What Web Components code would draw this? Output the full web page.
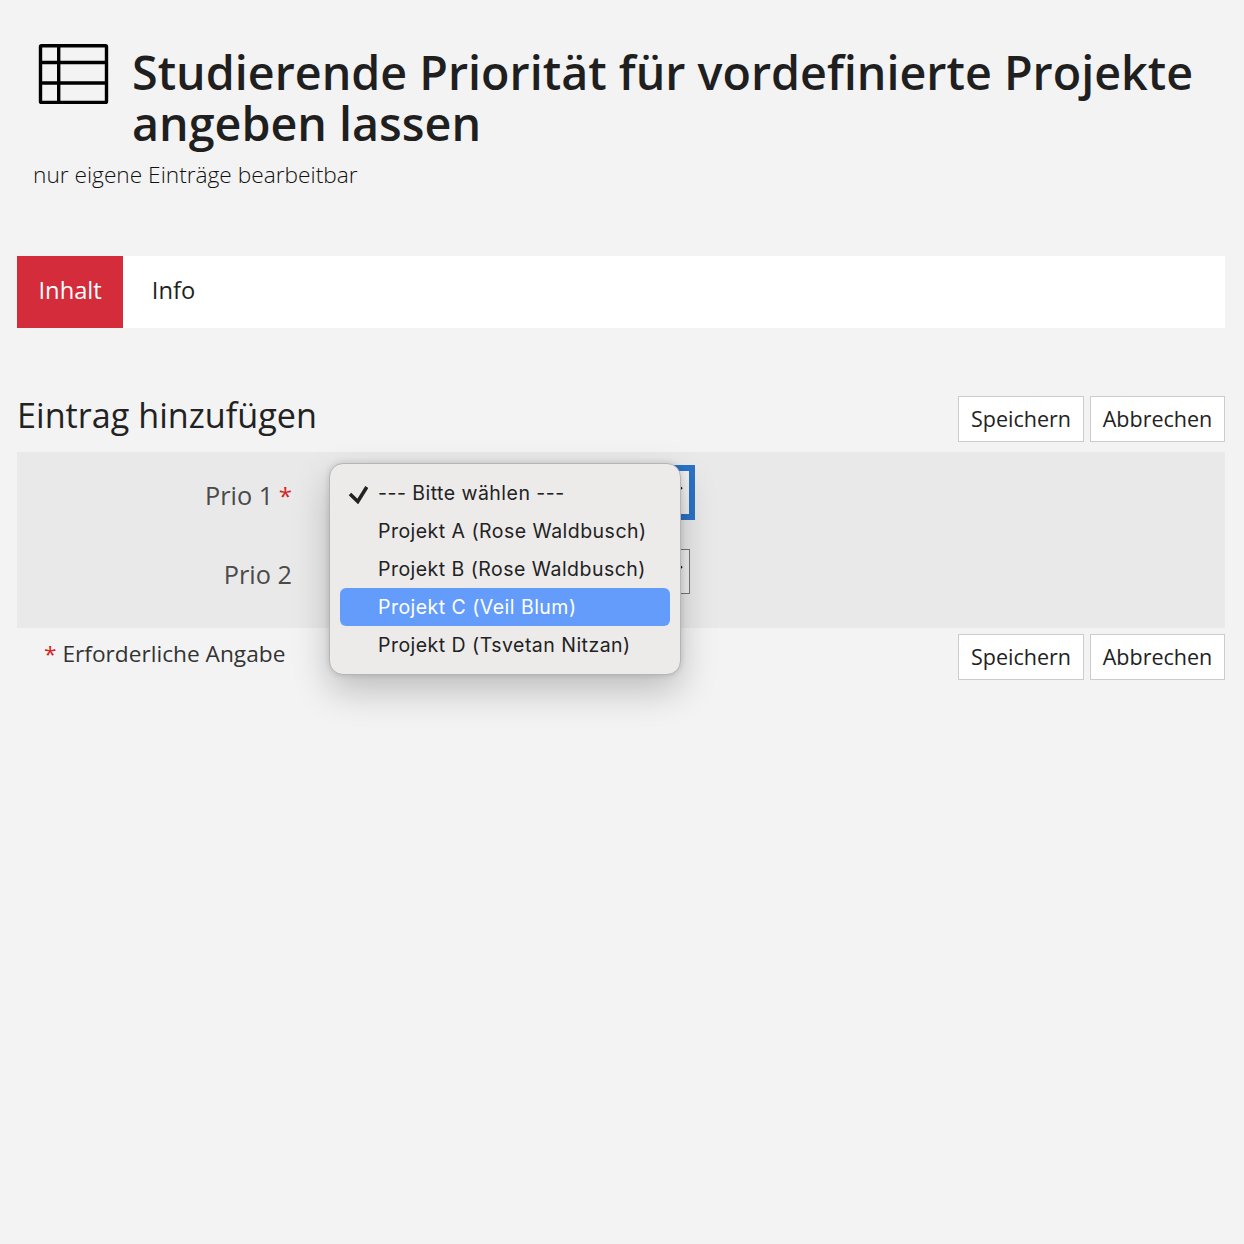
<!DOCTYPE html>
<html lang="de">
<head>
<meta charset="utf-8">
<title>Eintrag hinzufügen</title>
<style>
  html, body { margin: 0; height: 100%; }
  body {
    background: #f3f3f3;
    color: #1f1f1f;
    font-family: "Open Sans", "Liberation Sans", sans-serif;
  }
</style>
</head>
<body>
<page-shell>
  <page-header slot="header" subtitle="nur eigene Einträge bearbeitbar">Studierende Priorität für vordefinierte Projekte angeben lassen</page-header>
  <tab-bar slot="tabs">
    <tab-item active>Inhalt</tab-item>
    <tab-item>Info</tab-item>
  </tab-bar>
  <entry-form heading="Eintrag hinzufügen">
    <form-row label="Prio 1" required>
      <select-box focused></select-box>
      <select-menu>
        <menu-option checked>--- Bitte wählen ---</menu-option>
        <menu-option>Projekt A (Rose Waldbusch)</menu-option>
        <menu-option>Projekt B (Rose Waldbusch)</menu-option>
        <menu-option highlighted>Projekt C (Veil Blum)</menu-option>
        <menu-option>Projekt D (Tsvetan Nitzan)</menu-option>
      </select-menu>
    </form-row>
    <form-row label="Prio 2">
      <select-box></select-box>
    </form-row>
  </entry-form>
</page-shell>

<script>
  // small helper, every element renders its own css + html once
  const render = (el, css, html) => {
    el.attachShadow({ mode: "open" }).innerHTML = `<style>${css}</style>${html}`;
  };

  // ================================================================= page-shell
  customElements.define(
    "page-shell",
    class extends HTMLElement {
      constructor() {
        super();
        render(
          this,
          `:host { display: block; padding: 0 19px 0 17px; }`,
          `<slot name="header"></slot><slot name="tabs"></slot><slot></slot>`
        );
      }
    }
  );

  // ================================================================= page-header
  customElements.define(
    "page-header",
    class extends HTMLElement {
      constructor() {
        super();
        render(
          this,
          `:host { display: block; padding: 47px 0 0 16px; }
           .top { display: flex; align-items: flex-start; gap: 23px; }
           svg { flex: none; width: 72px; height: 62px; margin: -4px 0 0 4px; }
           h1 { margin: 0; font-size: 46.65px; line-height: 51px; font-weight: 600; color: #1f1f1f; }
           p { margin: 0; padding-top: 11px; font-size: 22.7px; line-height: 30px; font-weight: 300; color: #111; }`,
          `<div class="top">
             <svg viewBox="0 0 72 62" fill="none" stroke="#000" stroke-width="3.4">
               <rect x="3.5" y="2.8" width="66" height="56.6" rx="1"/>
               <path d="M3.5 19.5H69.5M3.5 40H69.5M21.7 2.8V59.4"/>
             </svg>
             <h1><slot></slot></h1>
           </div>
           <p>${this.getAttribute("subtitle")}</p>`
        );
      }
    }
  );

  // ================================================================= tabs
  customElements.define(
    "tab-bar",
    class extends HTMLElement {
      constructor() {
        super();
        render(
          this,
          `:host { display: flex; height: 72px; margin-top: 66px; background: #fff; }`,
          `<slot></slot>`
        );
      }
    }
  );

  customElements.define(
    "tab-item",
    class extends HTMLElement {
      constructor() {
        super();
        render(
          this,
          `:host { display: flex; align-items: center; padding: 0 21.5px 5px; margin-right: 8px;
                   font-size: 23.7px; color: #1f1f1f; }
           :host([active]) { background: #d42c3a; color: #fff; margin-right: 7px; }`,
          `<slot></slot>`
        );
      }
    }
  );

  // ================================================================= buttons
  customElements.define(
    "action-buttons",
    class extends HTMLElement {
      constructor() {
        super();
        render(
          this,
          `:host { display: flex; gap: 6px; }
           button { height: 46px; width: 126px; padding: 0 0 2px; background: #fff; border: 1px solid #ccc; border-radius: 0;
                    font: 400 21.5px "Open Sans", sans-serif; color: #222; }
           button + button { width: 135px; }`,
          `<button>Speichern</button><button>Abbrechen</button>`
        );
      }
    }
  );

  // ================================================================= entry-form
  customElements.define(
    "entry-form",
    class extends HTMLElement {
      constructor() {
        super();
        render(
          this,
          `:host { display: block; margin-top: 68px; }
           header { display: flex; justify-content: space-between; align-items: flex-start; height: 47px; }
           h2 { margin: -1.5px 0 0; padding-bottom: 10px; font-size: 34.2px; line-height: 40px; font-weight: 400; color: #222; }
           .band { display: flex; flex-direction: column; gap: 30px; margin-top: 9px; padding: 13px 0 34px; background: #e9e9e9; }
           footer { display: flex; justify-content: space-between; align-items: flex-start; padding-top: 6px; }
           .note { padding-left: 27px; font-size: 22.7px; line-height: 40px; color: #333; }
           .note b { color: #d3241f; font-weight: 400; }`,
          `<header><h2>${this.getAttribute("heading")}</h2><action-buttons></action-buttons></header>
           <div class="band"><slot></slot></div>
           <footer>
             <div class="note"><b>*</b> Erforderliche Angabe</div>
             <action-buttons></action-buttons>
           </footer>`
        );
      }
    }
  );

  // ================================================================= form-row
  customElements.define(
    "form-row",
    class extends HTMLElement {
      constructor() {
        super();
        const star = this.hasAttribute("required") ? ` <b>*</b>` : "";
        render(
          this,
          `:host { display: grid; grid-template-columns: 275px 1fr; column-gap: 56px; align-items: center; position: relative; }
           label { padding-top: 5px; text-align: right; font-size: 25.3px; line-height: 34px; color: #4a4a4a; }
           :host([required]) label { padding-top: 7px; }
           b { margin-left: -1px; color: #d3241f; font-weight: 400; font-size: 24px; }
           .field { display: flex; }`,
          `<label>${this.getAttribute("label")}${star}</label>
           <div class="field"><slot></slot></div>`
        );
      }
    }
  );

  // ================================================================= select-box (mostly hidden under the menu)
  customElements.define(
    "select-box",
    class extends HTMLElement {
      constructor() {
        super();
        render(
          this,
          `:host { display: flex; box-sizing: border-box; width: 342px; height: 45px; justify-content: flex-end;
                   align-items: center; padding: 0 6px 7px 0; background: #f0f0f0; border: 1px solid #777; }
           :host([focused]) { outline: 5px solid #2a72c6; border-color: #2a72c6; margin: 5px 0 4px; }
           svg { width: 8px; height: 6px; }`,
          `<svg viewBox="0 0 8 6" fill="none" stroke="#111" stroke-width="1.8"><path d="M1 1.5L4 4.5L7 1.5"/></svg>`
        );
      }
    }
  );

  // ================================================================= select-menu (native popup over the form)
  customElements.define(
    "select-menu",
    class extends HTMLElement {
      constructor() {
        super();
        render(
          this,
          `:host { display: block; position: absolute; left: 312px; top: -2px; box-sizing: border-box; width: 352px; height: 212px;
                   padding: 10px 10px 0; background: #ecebea; border: 1px solid #b5b5b5; border-radius: 14px;
                   box-shadow: 0 16px 36px rgba(0,0,0,.22), 0 0 6px rgba(0,0,0,.14); z-index: 5; }`,
          `<slot></slot>`
        );
      }
    }
  );

  customElements.define(
    "menu-option",
    class extends HTMLElement {
      constructor() {
        super();
        const check = this.hasAttribute("checked")
          ? `<svg viewBox="0 0 20 20" fill="none" stroke="#222" stroke-width="3.6"><path d="M2 10L9.8 17.5L18.8 3"/></svg>`
          : "";
        render(
          this,
          `:host { display: flex; align-items: center; position: relative; height: 38px; padding-left: 38px; border-radius: 6px;
                   font: 400 19.5px Inter, "Noto Sans", sans-serif; letter-spacing: 0.47px; color: #222; white-space: nowrap; }
           :host([highlighted]) { background: #639cfb; color: #fff; }
           svg { position: absolute; left: 8px; top: 10px; width: 20px; height: 20px; }`,
          `${check}<slot></slot>`
        );
      }
    }
  );
</script>
</body>
</html>
